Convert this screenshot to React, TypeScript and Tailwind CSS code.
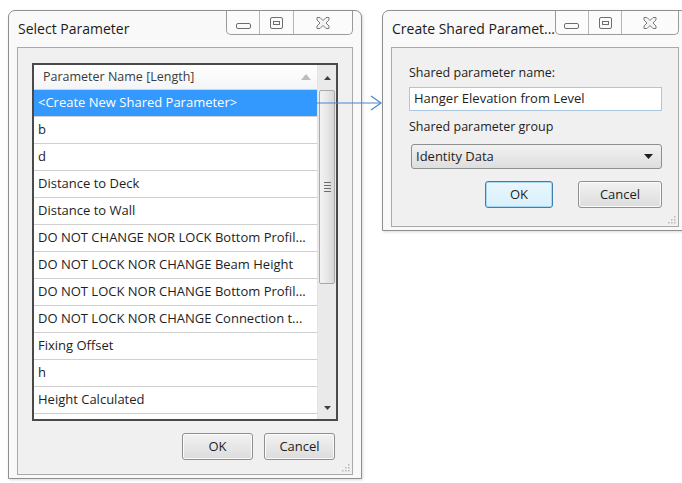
import React from "react";

const font = { fontFamily: '"Open Sans", "Noto Sans", sans-serif' };

const params = [
  "b",
  "d",
  "Distance to Deck",
  "Distance to Wall",
  "DO NOT CHANGE NOR LOCK Bottom Profil...",
  "DO NOT LOCK NOR CHANGE Beam Height",
  "DO NOT LOCK NOR CHANGE Bottom Profil...",
  "DO NOT LOCK NOR CHANGE Connection t...",
  "Fixing Offset",
  "h",
  "Height Calculated",
];

const CaptionButtons = ({ w }: { w: [number, number, number] }) => (
  <div className="flex h-[24px] border border-t-0 border-[#9a9a9a] rounded-b-[5px] bg-[#fbfbfb] overflow-hidden">
    <div className="flex items-center justify-center border-r border-[#b5b5b5]" style={{ width: w[0] }}>
      <div className="w-[15px] h-[6px] rounded-[2px] border border-[#6e6e6e] mt-[6px]" />
    </div>
    <div className="flex items-center justify-center border-r border-[#b5b5b5]" style={{ width: w[1] }}>
      <div className="w-[13px] h-[12px] rounded-[2px] border border-[#6e6e6e] flex items-center justify-center">
        <div className="w-[7px] h-[4px] border border-[#6e6e6e]" />
      </div>
    </div>
    <div className="flex items-center justify-center" style={{ width: w[2] }}>
      <svg width="16" height="14" viewBox="0 0 16 14">
        <path
          d="M2 1.5h3l3 3 3-3h3v2.5l-3 3 3 3v2.5h-3l-3-3-3 3h-3v-2.5l3-3-3-3z"
          fill="#f4f4f4"
          stroke="#7a7a7a"
          strokeWidth="1"
          strokeLinejoin="round"
        />
      </svg>
    </div>
  </div>
);

const Grip = () => (
  <svg width="10" height="10" viewBox="0 0 10 10" className="absolute right-[2px] bottom-[2px]">
    {[
      [8, 2],
      [8, 5],
      [5, 5],
      [8, 8],
      [5, 8],
      [2, 8],
    ].map(([x, y]) => (
      <rect key={`${x}-${y}`} x={x} y={y} width="1.5" height="1.5" fill="#b8b8b8" />
    ))}
  </svg>
);

const Btn = ({ label, w, focus }: { label: string; w: number; focus?: boolean }) => (
  <div
    className={`h-[27px] flex items-center justify-center rounded-[3px] border text-[13px] text-[#1e1e1e] bg-gradient-to-b ${
      focus
        ? "border-[#3c7fb1] from-[#eaf6fd] to-[#d9f0fc] shadow-[inset_0_0_0_1px_#a7d9f5]"
        : "border-[#8e8f8f] from-[#f2f2f2] to-[#dcdcdc] shadow-[inset_0_0_0_1px_#fbfbfb]"
    }`}
    style={{ width: w }}
  >
    {label}
  </div>
);

const Scrollbar = () => (
  <div className="w-[19px] flex flex-col bg-[#eaeaea] border-l border-[#e3e3e3]">
    <div className="h-[25px] flex items-center justify-center">
      <svg width="7" height="4" viewBox="0 0 7 4">
        <path d="M0 4L3.5 0L7 4z" fill="#404040" />
      </svg>
    </div>
    <div className="h-[194px] mx-[1px] rounded-[2px] border border-[#a9a9a9] bg-gradient-to-r from-[#f3f3f3] via-[#e8e8e8] to-[#d6d6d6] flex items-center justify-center">
      <div className="flex flex-col gap-[2px] w-[7px]">
        <div className="h-[1px] bg-[#6d6d6d]" />
        <div className="h-[1px] bg-[#6d6d6d]" />
        <div className="h-[1px] bg-[#6d6d6d]" />
        <div className="h-[1px] bg-[#6d6d6d]" />
      </div>
    </div>
    <div className="flex-1" />
    <div className="h-[22px] flex items-center justify-center">
      <svg width="7" height="4" viewBox="0 0 7 4">
        <path d="M0 0L3.5 4L7 0z" fill="#404040" />
      </svg>
    </div>
  </div>
);

const SelectParameter = () => (
  <div className="relative w-[355px] h-[469px] flex flex-col rounded-t-[7px] border border-[#8f8f8f] bg-[#f9f9f9] px-[8px] pb-[3px] shadow-[1px_1px_3px_rgba(0,0,0,0.15)]">
    <div className="h-[36px] flex items-start justify-between">
      <div className="pt-[7px] pl-[1px] text-[14px] text-[#1b1b1b]">Select Parameter</div>
      <CaptionButtons w={[33, 34, 58]} />
    </div>
    <div className="relative flex-1 flex flex-col border border-[#a9a9a9] bg-[#f0f0f0] px-[14px] pt-[15px]">
      <div className="w-[306px] h-[358px] flex border-2 border-[#4a4a4a] bg-white overflow-hidden">
        <div className="flex-1 flex flex-col min-w-0">
          <div className="h-[25px] shrink-0 flex items-center justify-between pl-[9px] pr-[6px] bg-gradient-to-b from-white to-[#f4f5f7] border-b border-[#d5d5d5] text-[12.5px] text-[#3b3b3b]">
            <span>Parameter Name [Length]</span>
            <svg width="10" height="6" viewBox="0 0 10 6">
              <path d="M0 6L5 0L10 6z" fill="#bcbcbc" />
            </svg>
          </div>
          <div className="h-[27px] shrink-0 flex items-center pl-[4px] bg-[#3399ff] text-[13px] text-white border-b border-[#d0d0d0]">
            &lt;Create New Shared Parameter&gt;
          </div>
          {params.map((p) => (
            <div
              key={p}
              className="h-[27px] shrink-0 flex items-center pl-[4px] border-b border-[#cfcfcf] text-[13px] text-[#1e1e1e] whitespace-nowrap"
            >
              {p}
            </div>
          ))}
        </div>
        <Scrollbar />
      </div>
      <div className="flex justify-end gap-[11px] w-[306px] mt-[12px] pr-[3px]">
        <Btn label="OK" w={71} />
        <Btn label="Cancel" w={71} />
      </div>
      <Grip />
    </div>
  </div>
);

const CreateSharedParameter = () => (
  <div className="relative w-[306px] shrink-0 h-[221px] flex flex-col rounded-t-[7px] border border-[#8f8f8f] bg-[#f9f9f9] px-[8px] pb-[3px] shadow-[1px_1px_3px_rgba(0,0,0,0.15)]">
    <div className="h-[36px] flex items-start justify-between">
      <div className="pt-[7px] pl-[1px] text-[14px] text-[#1b1b1b] whitespace-nowrap">Create Shared Paramet...</div>
      <CaptionButtons w={[33, 34, 56]} />
    </div>
    <div className="relative flex-1 flex flex-col border border-[#a9a9a9] bg-[#f0f0f0] pl-[17px] pr-[16px] pt-[16px] text-[13px] text-[#1e1e1e]">
      <div className="leading-[18px] text-[12.5px]">Shared parameter name:</div>
      <div className="mt-[5px] h-[24px] flex items-center pl-[4px] border border-[#abc7e0] bg-white">
        Hanger Elevation from Level
      </div>
      <div className="mt-[7px] leading-[18px] text-[12.5px]">Shared parameter group</div>
      <div className="mt-[8px] ml-[2px] h-[25px] flex items-center justify-between pl-[4px] pr-[8px] rounded-[3px] border border-[#8e8f8f] bg-gradient-to-b from-[#f2f2f2] to-[#dedede]">
        <span>Identity Data</span>
        <svg width="9" height="5" viewBox="0 0 9 5">
          <path d="M0 0L4.5 5L9 0z" fill="#1e1e1e" />
        </svg>
      </div>
      <div className="mt-[12px] flex justify-end gap-[25px]">
        <Btn label="OK" w={68} focus />
        <Btn label="Cancel" w={84} />
      </div>
      <Grip />
    </div>
  </div>
);

export default function App() {
  return (
    <div className="relative w-[682px] h-[483px] bg-white overflow-hidden" style={font}>
      <div className="flex items-start gap-[20px] pl-[8px] pt-[10px]">
        <SelectParameter />
        <CreateSharedParameter />
      </div>
      {/* link arrow from the selected row to the second dialog */}
      <svg className="absolute left-[316px] top-[94px]" width="68" height="18" viewBox="0 0 68 18">
        <path d="M0 9H65" stroke="#4a86c8" strokeWidth="1.2" />
        <path d="M55 2L65 9L55 16" fill="none" stroke="#4a86c8" strokeWidth="1.2" />
      </svg>
    </div>
  );
}
